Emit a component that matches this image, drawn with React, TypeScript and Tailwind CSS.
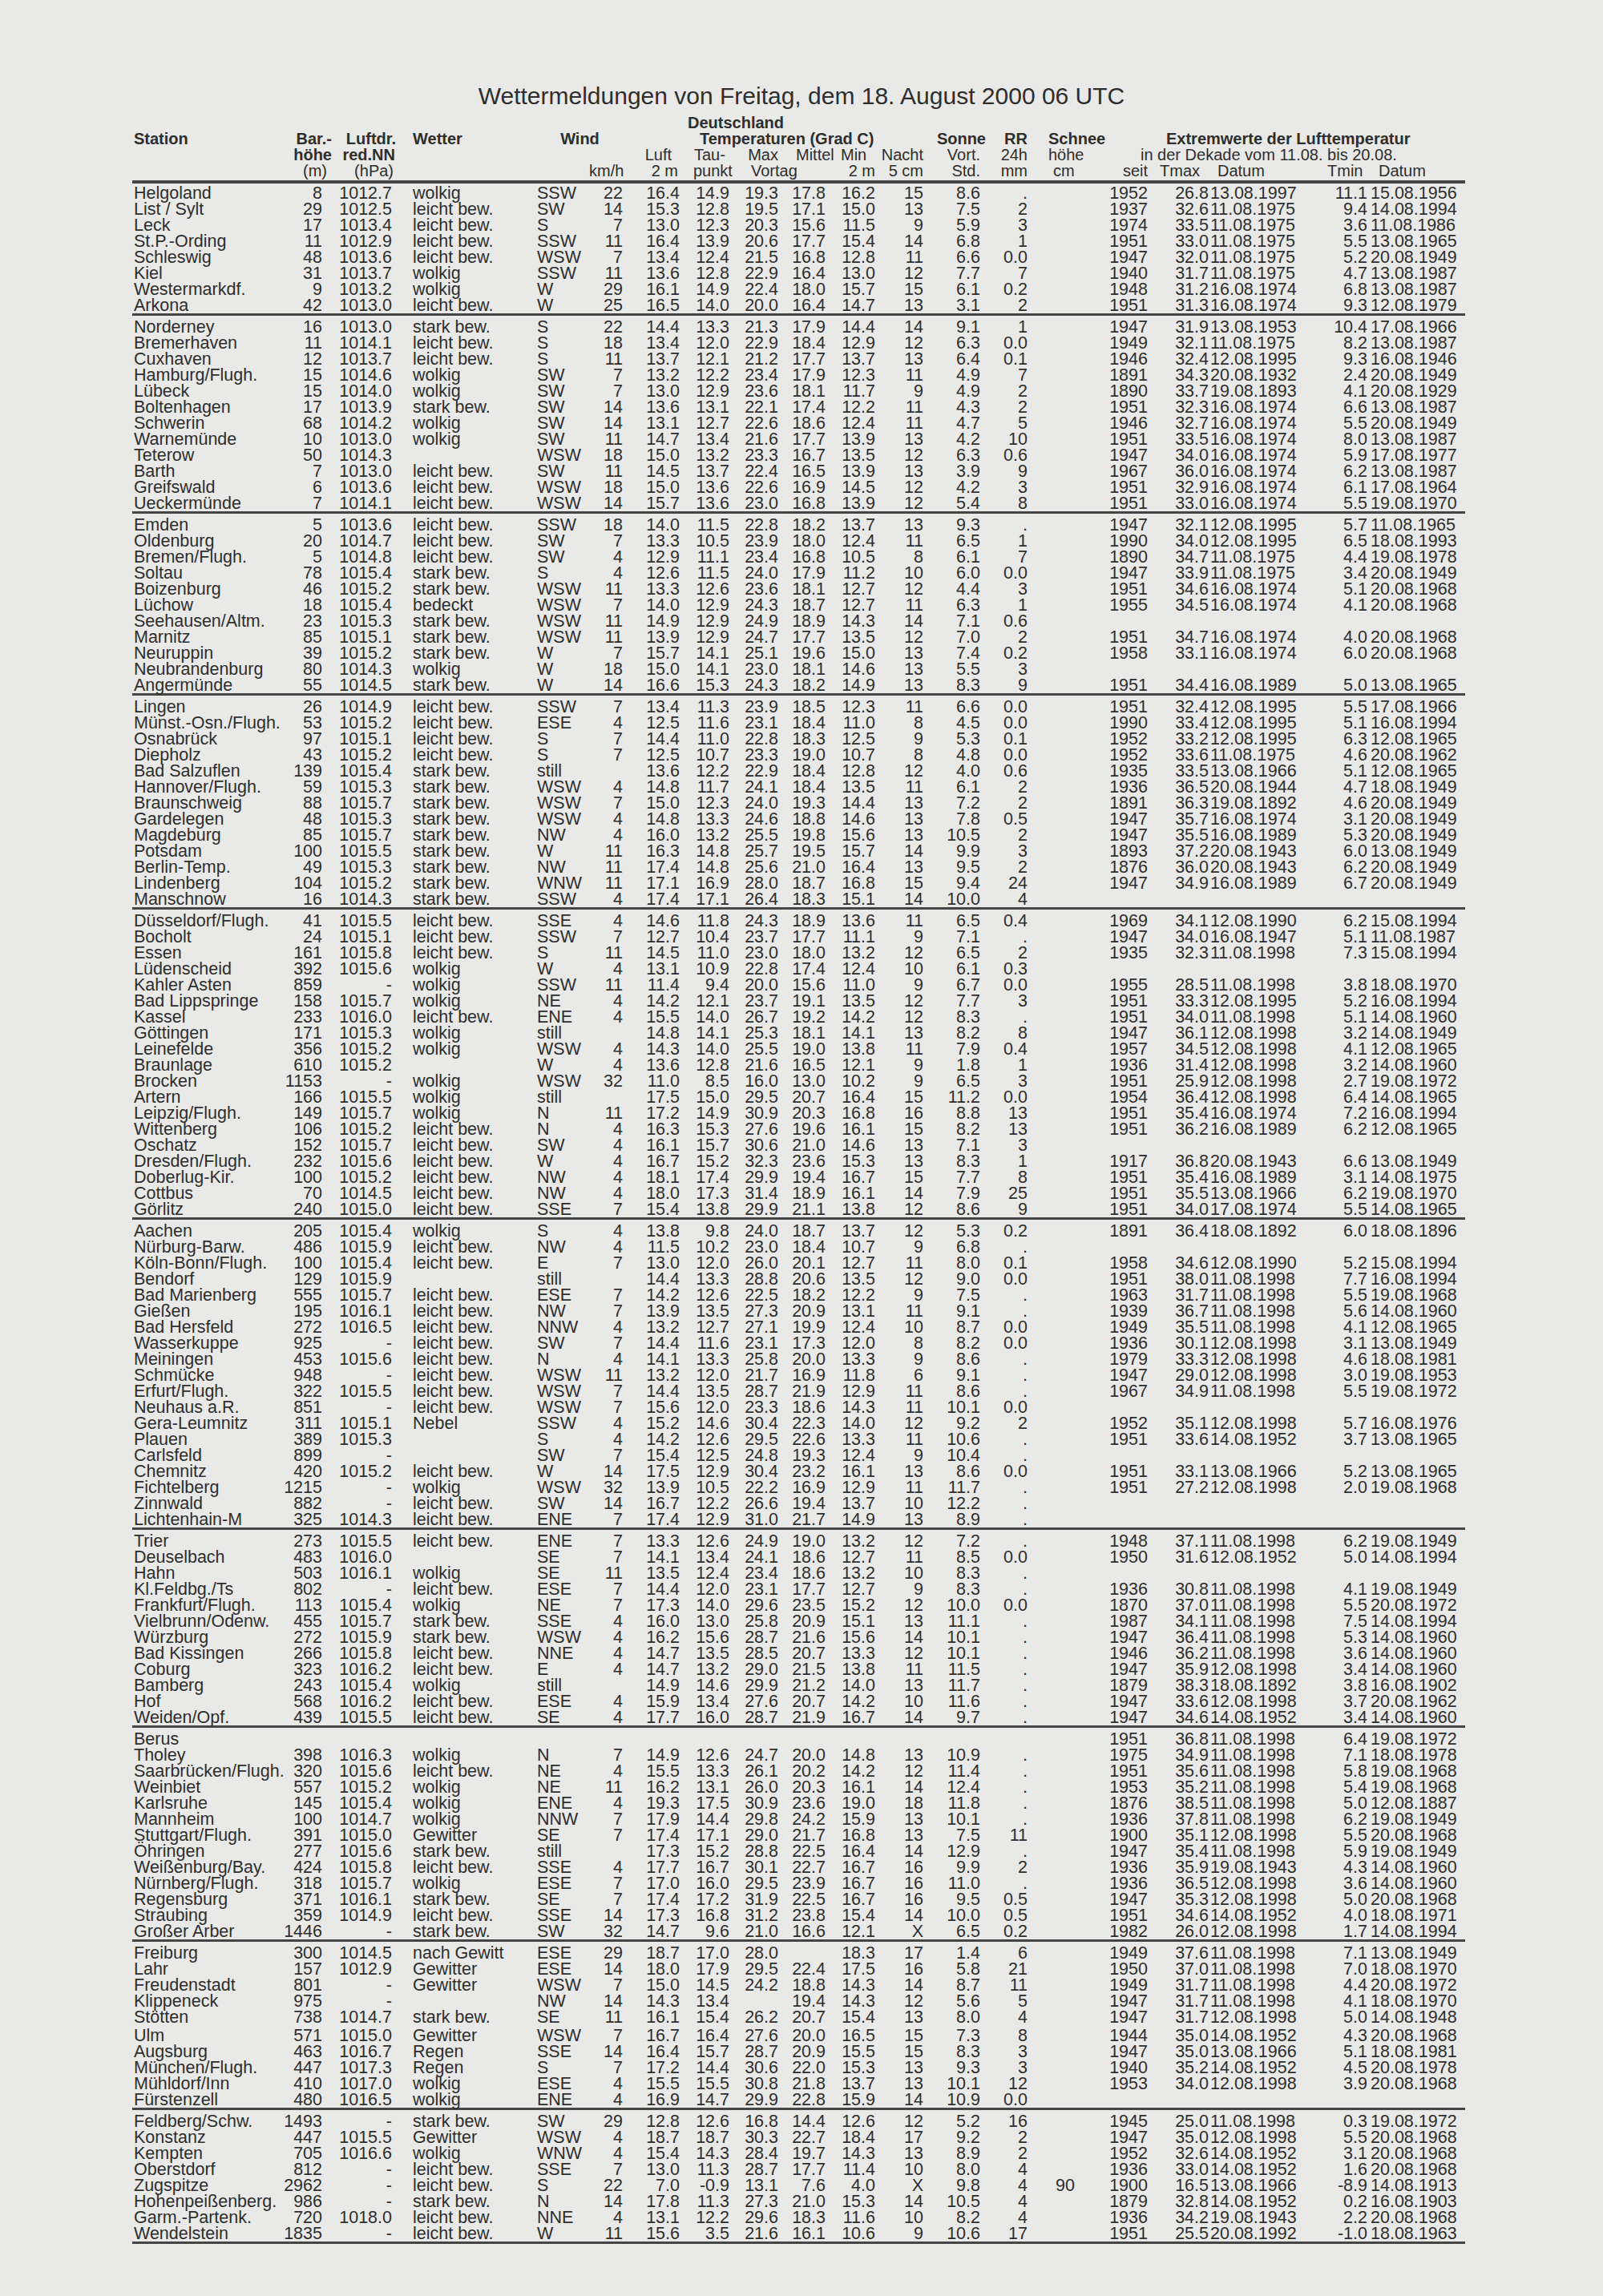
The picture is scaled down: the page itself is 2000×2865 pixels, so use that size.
const DATA = `Helgoland|8|1012.7|wolkig|SSW|22|16.4|14.9|19.3|17.8|16.2|15|8.6|.||1952|26.8|13.08.1997|11.1|15.08.1956
List / Sylt|29|1012.5|leicht bew.|SW|14|15.3|12.8|19.5|17.1|15.0|13|7.5|2||1937|32.6|11.08.1975|9.4|14.08.1994
Leck|17|1013.4|leicht bew.|S|7|13.0|12.3|20.3|15.6|11.5|9|5.9|3||1974|33.5|11.08.1975|3.6|11.08.1986
St.P.-Ording|11|1012.9|leicht bew.|SSW|11|16.4|13.9|20.6|17.7|15.4|14|6.8|1||1951|33.0|11.08.1975|5.5|13.08.1965
Schleswig|48|1013.6|leicht bew.|WSW|7|13.4|12.4|21.5|16.8|12.8|11|6.6|0.0||1947|32.0|11.08.1975|5.2|20.08.1949
Kiel|31|1013.7|wolkig|SSW|11|13.6|12.8|22.9|16.4|13.0|12|7.7|7||1940|31.7|11.08.1975|4.7|13.08.1987
Westermarkdf.|9|1013.2|wolkig|W|29|16.1|14.9|22.4|18.0|15.7|15|6.1|0.2||1948|31.2|16.08.1974|6.8|13.08.1987
Arkona|42|1013.0|leicht bew.|W|25|16.5|14.0|20.0|16.4|14.7|13|3.1|2||1951|31.3|16.08.1974|9.3|12.08.1979
---
Norderney|16|1013.0|stark bew.|S|22|14.4|13.3|21.3|17.9|14.4|14|9.1|1||1947|31.9|13.08.1953|10.4|17.08.1966
Bremerhaven|11|1014.1|leicht bew.|S|18|13.4|12.0|22.9|18.4|12.9|12|6.3|0.0||1949|32.1|11.08.1975|8.2|13.08.1987
Cuxhaven|12|1013.7|leicht bew.|S|11|13.7|12.1|21.2|17.7|13.7|13|6.4|0.1||1946|32.4|12.08.1995|9.3|16.08.1946
Hamburg/Flugh.|15|1014.6|wolkig|SW|7|13.2|12.2|23.4|17.9|12.3|11|4.9|7||1891|34.3|20.08.1932|2.4|20.08.1949
Lübeck|15|1014.0|wolkig|SW|7|13.0|12.9|23.6|18.1|11.7|9|4.9|2||1890|33.7|19.08.1893|4.1|20.08.1929
Boltenhagen|17|1013.9|stark bew.|SW|14|13.6|13.1|22.1|17.4|12.2|11|4.3|2||1951|32.3|16.08.1974|6.6|13.08.1987
Schwerin|68|1014.2|wolkig|SW|14|13.1|12.7|22.6|18.6|12.4|11|4.7|5||1946|32.7|16.08.1974|5.5|20.08.1949
Warnemünde|10|1013.0|wolkig|SW|11|14.7|13.4|21.6|17.7|13.9|13|4.2|10||1951|33.5|16.08.1974|8.0|13.08.1987
Teterow|50|1014.3||WSW|18|15.0|13.2|23.3|16.7|13.5|12|6.3|0.6||1947|34.0|16.08.1974|5.9|17.08.1977
Barth|7|1013.0|leicht bew.|SW|11|14.5|13.7|22.4|16.5|13.9|13|3.9|9||1967|36.0|16.08.1974|6.2|13.08.1987
Greifswald|6|1013.6|leicht bew.|WSW|18|15.0|13.6|22.6|16.9|14.5|12|4.2|3||1951|32.9|16.08.1974|6.1|17.08.1964
Ueckermünde|7|1014.1|leicht bew.|WSW|14|15.7|13.6|23.0|16.8|13.9|12|5.4|8||1951|33.0|16.08.1974|5.5|19.08.1970
---
Emden|5|1013.6|leicht bew.|SSW|18|14.0|11.5|22.8|18.2|13.7|13|9.3|.||1947|32.1|12.08.1995|5.7|11.08.1965
Oldenburg|20|1014.7|leicht bew.|SW|7|13.3|10.5|23.9|18.0|12.4|11|6.5|1||1990|34.0|12.08.1995|6.5|18.08.1993
Bremen/Flugh.|5|1014.8|leicht bew.|SW|4|12.9|11.1|23.4|16.8|10.5|8|6.1|7||1890|34.7|11.08.1975|4.4|19.08.1978
Soltau|78|1015.4|stark bew.|S|4|12.6|11.5|24.0|17.9|11.2|10|6.0|0.0||1947|33.9|11.08.1975|3.4|20.08.1949
Boizenburg|46|1015.2|stark bew.|WSW|11|13.3|12.6|23.6|18.1|12.7|12|4.4|3||1951|34.6|16.08.1974|5.1|20.08.1968
Lüchow|18|1015.4|bedeckt|WSW|7|14.0|12.9|24.3|18.7|12.7|11|6.3|1||1955|34.5|16.08.1974|4.1|20.08.1968
Seehausen/Altm.|23|1015.3|stark bew.|WSW|11|14.9|12.9|24.9|18.9|14.3|14|7.1|0.6
Marnitz|85|1015.1|stark bew.|WSW|11|13.9|12.9|24.7|17.7|13.5|12|7.0|2||1951|34.7|16.08.1974|4.0|20.08.1968
Neuruppin|39|1015.2|stark bew.|W|7|15.7|14.1|25.1|19.6|15.0|13|7.4|0.2||1958|33.1|16.08.1974|6.0|20.08.1968
Neubrandenburg|80|1014.3|wolkig|W|18|15.0|14.1|23.0|18.1|14.6|13|5.5|3
Angermünde|55|1014.5|stark bew.|W|14|16.6|15.3|24.3|18.2|14.9|13|8.3|9||1951|34.4|16.08.1989|5.0|13.08.1965
---
Lingen|26|1014.9|leicht bew.|SSW|7|13.4|11.3|23.9|18.5|12.3|11|6.6|0.0||1951|32.4|12.08.1995|5.5|17.08.1966
Münst.-Osn./Flugh.|53|1015.2|leicht bew.|ESE|4|12.5|11.6|23.1|18.4|11.0|8|4.5|0.0||1990|33.4|12.08.1995|5.1|16.08.1994
Osnabrück|97|1015.1|leicht bew.|S|7|14.4|11.0|22.8|18.3|12.5|9|5.3|0.1||1952|33.2|12.08.1995|6.3|12.08.1965
Diepholz|43|1015.2|leicht bew.|S|7|12.5|10.7|23.3|19.0|10.7|8|4.8|0.0||1952|33.6|11.08.1975|4.6|20.08.1962
Bad Salzuflen|139|1015.4|stark bew.|still||13.6|12.2|22.9|18.4|12.8|12|4.0|0.6||1935|33.5|13.08.1966|5.1|12.08.1965
Hannover/Flugh.|59|1015.3|stark bew.|WSW|4|14.8|11.7|24.1|18.4|13.5|11|6.1|2||1936|36.5|20.08.1944|4.7|18.08.1949
Braunschweig|88|1015.7|stark bew.|WSW|7|15.0|12.3|24.0|19.3|14.4|13|7.2|2||1891|36.3|19.08.1892|4.6|20.08.1949
Gardelegen|48|1015.3|stark bew.|WSW|4|14.8|13.3|24.6|18.8|14.6|13|7.8|0.5||1947|35.7|16.08.1974|3.1|20.08.1949
Magdeburg|85|1015.7|stark bew.|NW|4|16.0|13.2|25.5|19.8|15.6|13|10.5|2||1947|35.5|16.08.1989|5.3|20.08.1949
Potsdam|100|1015.5|stark bew.|W|11|16.3|14.8|25.7|19.5|15.7|14|9.9|3||1893|37.2|20.08.1943|6.0|13.08.1949
Berlin-Temp.|49|1015.3|stark bew.|NW|11|17.4|14.8|25.6|21.0|16.4|13|9.5|2||1876|36.0|20.08.1943|6.2|20.08.1949
Lindenberg|104|1015.2|stark bew.|WNW|11|17.1|16.9|28.0|18.7|16.8|15|9.4|24||1947|34.9|16.08.1989|6.7|20.08.1949
Manschnow|16|1014.3|stark bew.|SSW|4|17.4|17.1|26.4|18.3|15.1|14|10.0|4
---
Düsseldorf/Flugh.|41|1015.5|leicht bew.|SSE|4|14.6|11.8|24.3|18.9|13.6|11|6.5|0.4||1969|34.1|12.08.1990|6.2|15.08.1994
Bocholt|24|1015.1|leicht bew.|SSW|7|12.7|10.4|23.7|17.7|11.1|9|7.1|.||1947|34.0|16.08.1947|5.1|11.08.1987
Essen|161|1015.8|leicht bew.|S|11|14.5|11.0|23.0|18.0|13.2|12|6.5|2||1935|32.3|11.08.1998|7.3|15.08.1994
Lüdenscheid|392|1015.6|wolkig|W|4|13.1|10.9|22.8|17.4|12.4|10|6.1|0.3
Kahler Asten|859|-|wolkig|SSW|11|11.4|9.4|20.0|15.6|11.0|9|6.7|0.0||1955|28.5|11.08.1998|3.8|18.08.1970
Bad Lippspringe|158|1015.7|wolkig|NE|4|14.2|12.1|23.7|19.1|13.5|12|7.7|3||1951|33.3|12.08.1995|5.2|16.08.1994
Kassel|233|1016.0|leicht bew.|ENE|4|15.5|14.0|26.7|19.2|14.2|12|8.3|.||1951|34.0|11.08.1998|5.1|14.08.1960
Göttingen|171|1015.3|wolkig|still||14.8|14.1|25.3|18.1|14.1|13|8.2|8||1947|36.1|12.08.1998|3.2|14.08.1949
Leinefelde|356|1015.2|wolkig|WSW|4|14.3|14.0|25.5|19.0|13.8|11|7.9|0.4||1957|34.5|12.08.1998|4.1|12.08.1965
Braunlage|610|1015.2||W|4|13.6|12.8|21.6|16.5|12.1|9|1.8|1||1936|31.4|12.08.1998|3.2|14.08.1960
Brocken|1153|-|wolkig|WSW|32|11.0|8.5|16.0|13.0|10.2|9|6.5|3||1951|25.9|12.08.1998|2.7|19.08.1972
Artern|166|1015.5|wolkig|still||17.5|15.0|29.5|20.7|16.4|15|11.2|0.0||1954|36.4|12.08.1998|6.4|14.08.1965
Leipzig/Flugh.|149|1015.7|wolkig|N|11|17.2|14.9|30.9|20.3|16.8|16|8.8|13||1951|35.4|16.08.1974|7.2|16.08.1994
Wittenberg|106|1015.2|leicht bew.|N|4|16.3|15.3|27.6|19.6|16.1|15|8.2|13||1951|36.2|16.08.1989|6.2|12.08.1965
Oschatz|152|1015.7|leicht bew.|SW|4|16.1|15.7|30.6|21.0|14.6|13|7.1|3
Dresden/Flugh.|232|1015.6|leicht bew.|W|4|16.7|15.2|32.3|23.6|15.3|13|8.3|1||1917|36.8|20.08.1943|6.6|13.08.1949
Doberlug-Kir.|100|1015.2|leicht bew.|NW|4|18.1|17.4|29.9|19.4|16.7|15|7.7|8||1951|35.4|16.08.1989|3.1|14.08.1975
Cottbus|70|1014.5|leicht bew.|NW|4|18.0|17.3|31.4|18.9|16.1|14|7.9|25||1951|35.5|13.08.1966|6.2|19.08.1970
Görlitz|240|1015.0|leicht bew.|SSE|7|15.4|13.8|29.9|21.1|13.8|12|8.6|9||1951|34.0|17.08.1974|5.5|14.08.1965
---
Aachen|205|1015.4|wolkig|S|4|13.8|9.8|24.0|18.7|13.7|12|5.3|0.2||1891|36.4|18.08.1892|6.0|18.08.1896
Nürburg-Barw.|486|1015.9|leicht bew.|NW|4|11.5|10.2|23.0|18.4|10.7|9|6.8|.
Köln-Bonn/Flugh.|100|1015.4|leicht bew.|E|7|13.0|12.0|26.0|20.1|12.7|11|8.0|0.1||1958|34.6|12.08.1990|5.2|15.08.1994
Bendorf|129|1015.9||still||14.4|13.3|28.8|20.6|13.5|12|9.0|0.0||1951|38.0|11.08.1998|7.7|16.08.1994
Bad Marienberg|555|1015.7|leicht bew.|ESE|7|14.2|12.6|22.5|18.2|12.2|9|7.5|.||1963|31.7|11.08.1998|5.5|19.08.1968
Gießen|195|1016.1|leicht bew.|NW|7|13.9|13.5|27.3|20.9|13.1|11|9.1|.||1939|36.7|11.08.1998|5.6|14.08.1960
Bad Hersfeld|272|1016.5|leicht bew.|NNW|4|13.2|12.7|27.1|19.9|12.4|10|8.7|0.0||1949|35.5|11.08.1998|4.1|12.08.1965
Wasserkuppe|925|-|leicht bew.|SW|7|14.4|11.6|23.1|17.3|12.0|8|8.2|0.0||1936|30.1|12.08.1998|3.1|13.08.1949
Meiningen|453|1015.6|leicht bew.|N|4|14.1|13.3|25.8|20.0|13.3|9|8.6|.||1979|33.3|12.08.1998|4.6|18.08.1981
Schmücke|948|-|leicht bew.|WSW|11|13.2|12.0|21.7|16.9|11.8|6|9.1|.||1947|29.0|12.08.1998|3.0|19.08.1953
Erfurt/Flugh.|322|1015.5|leicht bew.|WSW|7|14.4|13.5|28.7|21.9|12.9|11|8.6|.||1967|34.9|11.08.1998|5.5|19.08.1972
Neuhaus a.R.|851|-|leicht bew.|WSW|7|15.6|12.0|23.3|18.6|14.3|11|10.1|0.0
Gera-Leumnitz|311|1015.1|Nebel|SSW|4|15.2|14.6|30.4|22.3|14.0|12|9.2|2||1952|35.1|12.08.1998|5.7|16.08.1976
Plauen|389|1015.3||S|4|14.2|12.6|29.5|22.6|13.3|11|10.6|.||1951|33.6|14.08.1952|3.7|13.08.1965
Carlsfeld|899|-||SW|7|15.4|12.5|24.8|19.3|12.4|9|10.4|.
Chemnitz|420|1015.2|leicht bew.|W|14|17.5|12.9|30.4|23.2|16.1|13|8.6|0.0||1951|33.1|13.08.1966|5.2|13.08.1965
Fichtelberg|1215|-|wolkig|WSW|32|13.9|10.5|22.2|16.9|12.9|11|11.7|.||1951|27.2|12.08.1998|2.0|19.08.1968
Zinnwald|882|-|leicht bew.|SW|14|16.7|12.2|26.6|19.4|13.7|10|12.2|.
Lichtenhain-M|325|1014.3|leicht bew.|ENE|7|17.4|12.9|31.0|21.7|14.9|13|8.9|.
---
Trier|273|1015.5|leicht bew.|ENE|7|13.3|12.6|24.9|19.0|13.2|12|7.2|.||1948|37.1|11.08.1998|6.2|19.08.1949
Deuselbach|483|1016.0||SE|7|14.1|13.4|24.1|18.6|12.7|11|8.5|0.0||1950|31.6|12.08.1952|5.0|14.08.1994
Hahn|503|1016.1|wolkig|SE|11|13.5|12.4|23.4|18.6|13.2|10|8.3|.
Kl.Feldbg./Ts|802|-|leicht bew.|ESE|7|14.4|12.0|23.1|17.7|12.7|9|8.3|.||1936|30.8|11.08.1998|4.1|19.08.1949
Frankfurt/Flugh.|113|1015.4|wolkig|NE|7|17.3|14.0|29.6|23.5|15.2|12|10.0|0.0||1870|37.0|11.08.1998|5.5|20.08.1972
Vielbrunn/Odenw.|455|1015.7|stark bew.|SSE|4|16.0|13.0|25.8|20.9|15.1|13|11.1|.||1987|34.1|11.08.1998|7.5|14.08.1994
Würzburg|272|1015.9|stark bew.|WSW|4|16.2|15.6|28.7|21.6|15.6|14|10.1|.||1947|36.4|11.08.1998|5.3|14.08.1960
Bad Kissingen|266|1015.8|leicht bew.|NNE|4|14.7|13.5|28.5|20.7|13.3|12|10.1|.||1946|36.2|11.08.1998|3.6|14.08.1960
Coburg|323|1016.2|leicht bew.|E|4|14.7|13.2|29.0|21.5|13.8|11|11.5|.||1947|35.9|12.08.1998|3.4|14.08.1960
Bamberg|243|1015.4|wolkig|still||14.9|14.6|29.9|21.2|14.0|13|11.7|.||1879|38.3|18.08.1892|3.8|16.08.1902
Hof|568|1016.2|leicht bew.|ESE|4|15.9|13.4|27.6|20.7|14.2|10|11.6|.||1947|33.6|12.08.1998|3.7|20.08.1962
Weiden/Opf.|439|1015.5|leicht bew.|SE|4|17.7|16.0|28.7|21.9|16.7|14|9.7|.||1947|34.6|14.08.1952|3.4|14.08.1960
---
Berus${"|".repeat(15)}1951|36.8|11.08.1998|6.4|19.08.1972
Tholey|398|1016.3|wolkig|N|7|14.9|12.6|24.7|20.0|14.8|13|10.9|.||1975|34.9|11.08.1998|7.1|18.08.1978
Saarbrücken/Flugh.|320|1015.6|leicht bew.|NE|4|15.5|13.3|26.1|20.2|14.2|12|11.4|.||1951|35.6|11.08.1998|5.8|19.08.1968
Weinbiet|557|1015.2|wolkig|NE|11|16.2|13.1|26.0|20.3|16.1|14|12.4|.||1953|35.2|11.08.1998|5.4|19.08.1968
Karlsruhe|145|1015.4|wolkig|ENE|4|19.3|17.5|30.9|23.6|19.0|18|11.8|.||1876|38.5|11.08.1998|5.0|12.08.1887
Mannheim|100|1014.7|wolkig|NNW|7|17.9|14.4|29.8|24.2|15.9|13|10.1|.||1936|37.8|11.08.1998|6.2|19.08.1949
Stuttgart/Flugh.|391|1015.0|Gewitter|SE|7|17.4|17.1|29.0|21.7|16.8|13|7.5|11||1900|35.1|12.08.1998|5.5|20.08.1968
Öhringen|277|1015.6|stark bew.|still||17.3|15.2|28.8|22.5|16.4|14|12.9|.||1947|35.4|11.08.1998|5.9|19.08.1949
Weißenburg/Bay.|424|1015.8|leicht bew.|SSE|4|17.7|16.7|30.1|22.7|16.7|16|9.9|2||1936|35.9|19.08.1943|4.3|14.08.1960
Nürnberg/Flugh.|318|1015.7|wolkig|ESE|7|17.0|16.0|29.5|23.9|16.7|16|11.0|.||1936|36.5|12.08.1998|3.6|14.08.1960
Regensburg|371|1016.1|stark bew.|SE|7|17.4|17.2|31.9|22.5|16.7|16|9.5|0.5||1947|35.3|12.08.1998|5.0|20.08.1968
Straubing|359|1014.9|leicht bew.|SSE|14|17.3|16.8|31.2|23.8|15.4|14|10.0|0.5||1951|34.6|14.08.1952|4.0|18.08.1971
Großer Arber|1446|-|stark bew.|SW|32|14.7|9.6|21.0|16.6|12.1|X|6.5|0.2||1982|26.0|12.08.1998|1.7|14.08.1994
---
Freiburg|300|1014.5|nach Gewitt|ESE|29|18.7|17.0|28.0||18.3|17|1.4|6||1949|37.6|11.08.1998|7.1|13.08.1949
Lahr|157|1012.9|Gewitter|ESE|14|18.0|17.9|29.5|22.4|17.5|16|5.8|21||1950|37.0|11.08.1998|7.0|18.08.1970
Freudenstadt|801|-|Gewitter|WSW|7|15.0|14.5|24.2|18.8|14.3|14|8.7|11||1949|31.7|11.08.1998|4.4|20.08.1972
Klippeneck|975|-||NW|14|14.3|13.4||19.4|14.3|12|5.6|5||1947|31.7|11.08.1998|4.1|18.08.1970
Stötten|738|1014.7|stark bew.|SE|11|16.1|15.4|26.2|20.7|15.4|13|8.0|4||1947|31.7|12.08.1998|5.0|14.08.1948
^Ulm|571|1015.0|Gewitter|WSW|7|16.7|16.4|27.6|20.0|16.5|15|7.3|8||1944|35.0|14.08.1952|4.3|20.08.1968
Augsburg|463|1016.7|Regen|SSE|14|16.4|15.7|28.7|20.9|15.5|15|8.3|3||1947|35.0|13.08.1966|5.1|18.08.1981
München/Flugh.|447|1017.3|Regen|S|7|17.2|14.4|30.6|22.0|15.3|13|9.3|3||1940|35.2|14.08.1952|4.5|20.08.1978
Mühldorf/Inn|410|1017.0|wolkig|ESE|4|15.5|15.5|30.8|21.8|13.7|13|10.1|12||1953|34.0|12.08.1998|3.9|20.08.1968
Fürstenzell|480|1016.5|wolkig|ENE|4|16.9|14.7|29.9|22.8|15.9|14|10.9|0.0
---
Feldberg/Schw.|1493|-|stark bew.|SW|29|12.8|12.6|16.8|14.4|12.6|12|5.2|16||1945|25.0|11.08.1998|0.3|19.08.1972
Konstanz|447|1015.5|Gewitter|WSW|4|18.7|18.7|30.3|22.7|18.4|17|9.2|2||1947|35.0|12.08.1998|5.5|20.08.1968
Kempten|705|1016.6|wolkig|WNW|4|15.4|14.3|28.4|19.7|14.3|13|8.9|2||1952|32.6|14.08.1952|3.1|20.08.1968
Oberstdorf|812|-|leicht bew.|SSE|7|13.0|11.3|28.7|17.7|11.4|10|8.0|4||1936|33.0|14.08.1952|1.6|20.08.1968
Zugspitze|2962|-|leicht bew.|S|22|7.0|-0.9|13.1|7.6|4.0|X|9.8|4|90|1900|16.5|13.08.1966|-8.9|14.08.1913
Hohenpeißenberg.|986|-|stark bew.|N|14|17.8|11.3|27.3|21.0|15.3|14|10.5|4||1879|32.8|14.08.1952|0.2|16.08.1903
Garm.-Partenk.|720|1018.0|leicht bew.|NNE|4|13.1|12.2|29.6|18.3|11.6|10|8.2|4||1936|34.2|19.08.1943|2.2|20.08.1968
Wendelstein|1835|-|leicht bew.|W|11|15.6|3.5|21.6|16.1|10.6|9|10.6|17||1951|25.5|20.08.1992|-1.0|18.08.1963`;

// one group per block between "---" lines; a leading "^" marks a row with a small gap above
const groups = DATA.split("\n---\n").map((block) =>
  block.split("\n").map((line) => {
    const gap = line.startsWith("^");
    const cells = (gap ? line.slice(1) : line).split("|");
    while (cells.length < 20) cells.push("");
    return { gap, cells };
  })
);

const GRID =
  "grid grid-cols-[187px_50px_87px_181px_65px_42px_71px_62px_61px_59px_62px_60px_71px_59px_59px_91px_76px_128px_70px_122px]";

const ALIGN = [
  "pl-[2px] text-left",
  "text-right",
  "text-right",
  "pl-[26px] text-left",
  "text-left",
  "text-right",
  "text-right",
  "text-right",
  "text-right",
  "text-right",
  "text-right",
  "text-right",
  "text-right",
  "text-right",
  "text-right",
  "text-right",
  "text-right",
  "pl-[2px] text-left",
  "text-right",
  "pl-[4px] text-left",
];

function Row({ cells, gap }: { cells: string[]; gap: boolean }) {
  return (
    <div className={`${GRID} h-[20px] leading-[20px] ${gap ? "mt-[3px]" : ""}`}>
      {cells.map((c, i) => (
        <div key={i} className={`whitespace-nowrap ${ALIGN[i]}`}>
          {c}
        </div>
      ))}
    </div>
  );
}

export default function App() {
  return (
    <div className="min-h-[2865px] w-full bg-[#e9e9e7] text-[#2e2e2e] font-['Liberation_Sans',Arial,sans-serif] pt-[102px]">
      <h1 className="text-center text-[30px] leading-[36px] font-normal">
        Wettermeldungen von Freitag, dem 18. August 2000 06 UTC
      </h1>

      <div className="ml-[165px] w-[1663px]">
        {/* column headings */}
        <div className="mt-[5px] text-[20px] leading-[20px]">
          <div className={`${GRID} h-[20px] font-bold`}>
            <div className="col-start-7 col-span-6 pl-[81px] whitespace-nowrap">Deutschland</div>
          </div>
          <div className={`${GRID} h-[20px] font-bold whitespace-nowrap`}>
            <div className="pl-[2px]">Station</div>
            <div className="text-right -mr-[12px]">Bar.-</div>
            <div className="text-right -mr-[5px]">Luftdr.</div>
            <div className="pl-[26px]">Wetter</div>
            <div className="col-span-2 text-center">Wind</div>
            <div className="col-span-6 pl-[96px]">Temperaturen (Grad C)</div>
            <div className="text-right -mr-[7px]">Sonne</div>
            <div className="text-right">RR</div>
            <div className="pl-[26px]">Schnee</div>
            <div className="col-span-5 pl-[114px]">Extremwerte der Lufttemperatur</div>
          </div>
          <div className={`${GRID} h-[20px] whitespace-nowrap`}>
            <div />
            <div className="text-right -mr-[12px] font-bold">höhe</div>
            <div className="text-right -mr-[4px] font-bold">red.NN</div>
            <div />
            <div />
            <div />
            <div className="text-right pr-[10px]">Luft</div>
            <div className="pl-[18px]">Tau-</div>
            <div className="text-right">Max</div>
            <div className="pl-[22px]">Mittel</div>
            <div className="pl-[19px]">Min</div>
            <div className="text-right">Nacht</div>
            <div className="text-right">Vort.</div>
            <div className="text-right">24h</div>
            <div className="pl-[26px]">höhe</div>
            <div className="col-span-5 pl-[82px]">in der Dekade vom 11.08. bis 20.08.</div>
          </div>
          <div className={`${GRID} h-[20px] whitespace-nowrap`}>
            <div />
            <div className="text-right -mr-[6px]">(m)</div>
            <div className="text-right -mr-[2px]">(hPa)</div>
            <div />
            <div />
            <div className="text-right">km/h</div>
            <div className="text-right pr-[2px]">2 m</div>
            <div className="pl-[17px]">punkt</div>
            <div className="col-span-2 pl-[27px]">Vortag</div>
            <div className="text-right">2 m</div>
            <div className="text-right">5 cm</div>
            <div className="text-right">Std.</div>
            <div className="text-right">mm</div>
            <div className="pl-[32px]">cm</div>
            <div className="text-right">seit</div>
            <div className="pl-[15px]">Tmax</div>
            <div className="pl-[11px]">Datum</div>
            <div className="pl-[20px]">Tmin</div>
            <div className="pl-[14px]">Datum</div>
          </div>
        </div>

        <div className="mt-[2px] h-[4px] bg-[#454545]" />

        {/* station groups, each closed by a rule */}
        <div className="mt-[2px] text-[21.5px]">
          {groups.map((rows, g) => (
            <div key={g} className="border-b-[3px] border-[#454545] mb-[4px]">
              {rows.map((r, i) => (
                <Row key={i} cells={r.cells} gap={r.gap} />
              ))}
            </div>
          ))}
        </div>
      </div>
    </div>
  );
}
